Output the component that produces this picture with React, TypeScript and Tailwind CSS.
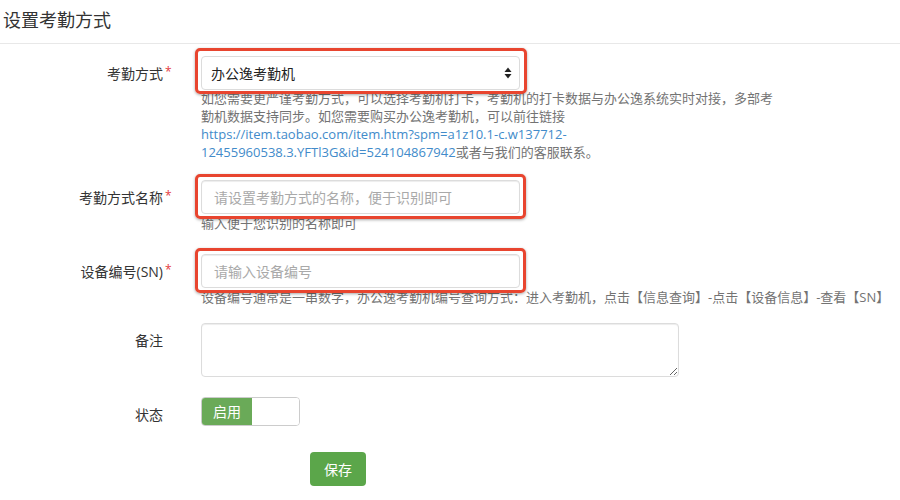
import React from "react";

const font = "font-['Open_Sans','Noto_Sans_CJK_SC',sans-serif]";

function Label({ text, required }: { text: string; required?: boolean }) {
  return (
    <div className="w-[163px] shrink-0 h-[34px] flex items-center justify-end">
      <span className="relative text-[14px] text-[#333]">
        {text}
        {required && (
          <span className="absolute left-full top-[0px] ml-[2px] text-[#e4393c] text-[12px]">*</span>
        )}
      </span>
    </div>
  );
}

function RedBox({ cls }: { cls: string }) {
  return (
    <div
      className={`pointer-events-none absolute border-[3px] border-[#e8452f] rounded-[5px] shadow-[0_1px_3px_rgba(0,0,0,0.35)] ${cls}`}
    />
  );
}

export default function App() {
  return (
    <div className={`w-[900px] h-[500px] bg-white overflow-hidden ${font}`}>
      <div className="h-[44px] border-b border-[#e8e8e8] flex items-center pl-[3px] pb-[2px]">
        <h1 className="text-[18px] text-[#333]">设置考勤方式</h1>
      </div>

      {/* Row 1 */}
      <div className="flex gap-[38px] mt-[12px]">
        <Label text="考勤方式" required />
        <div className="w-[319px] shrink-0">
          <div className="relative">
            <div className="h-[34px] border border-[#dcdcdc] rounded-[4px] bg-white flex items-center justify-between pl-[9px] pr-[7px]">
              <span className="text-[14px] text-[#222]">办公逸考勤机</span>
              <svg width="8" height="12" viewBox="0 0 8 12">
                <path d="M4 0.5 L7.5 5 L0.5 5 Z" fill="#222" />
                <path d="M4 11.5 L7.5 7 L0.5 7 Z" fill="#222" />
              </svg>
            </div>
            <RedBox cls="left-[-6px] right-[-7px] top-[-8px] bottom-[-4px]" />
          </div>
          <p className="w-[620px] text-[13px] leading-[18px] text-[#737373] whitespace-nowrap -mt-[1px]">
            如您需要更严谨考勤方式，可以选择考勤机打卡，考勤机的打卡数据与办公逸系统实时对接，多部考
            <br />
            勤机数据支持同步。如您需要购买办公逸考勤机，可以前往链接
            <br />
            <a className="text-[#428bca]">
              https://item.taobao.com/item.htm?spm=a1z10.1-c.w137712-
              <br />
              12455960538.3.YFTl3G&amp;id=524104867942
            </a>
            或者与我们的客服联系。
          </p>
        </div>
      </div>

      {/* Row 2 */}
      <div className="flex gap-[38px] mt-[19px]">
        <Label text="考勤方式名称" required />
        <div className="w-[319px] shrink-0">
          <div className="relative">
            <input
              className="w-full h-[34px] border border-[#dcdcdc] rounded-[4px] px-[12px] text-[14px] text-[#333] placeholder:text-[#a9a9a9] shadow-[inset_0_1px_1px_rgba(0,0,0,0.075)] outline-none"
              placeholder="请设置考勤方式的名称，便于识别即可"
            />
            <RedBox cls="left-[-6px] right-[-6px] top-[-6px] bottom-[-5px]" />
          </div>
          <p className="text-[13px] leading-[18px] text-[#737373] whitespace-nowrap">输入便于您识别的名称即可</p>
        </div>
      </div>

      {/* Row 3 */}
      <div className="flex gap-[38px] mt-[22px]">
        <Label text="设备编号(SN)" required />
        <div className="w-[319px] shrink-0">
          <div className="relative">
            <input
              className="w-full h-[34px] border border-[#dcdcdc] rounded-[4px] px-[12px] text-[14px] text-[#333] placeholder:text-[#a9a9a9] shadow-[inset_0_1px_1px_rgba(0,0,0,0.075)] outline-none"
              placeholder="请输入设备编号"
            />
            <RedBox cls="left-[-6px] right-[-6px] top-[-6px] bottom-[-5px]" />
          </div>
          <p className="text-[13px] leading-[18px] text-[#737373] whitespace-nowrap">
            设备编号通常是一串数字，办公逸考勤机编号查询方式：进入考勤机，点击【信息查询】-点击【设备信息】-查看【SN】
          </p>
        </div>
      </div>

      {/* Row 4 */}
      <div className="flex gap-[38px] mt-[17px]">
        <Label text="备注" />
        <textarea className="w-[478px] h-[54px] border border-[#dcdcdc] rounded-[4px] shadow-[inset_0_1px_1px_rgba(0,0,0,0.075)] outline-none" />
      </div>

      {/* Row 5 */}
      <div className="flex gap-[38px] mt-[20px]">
        <Label text="状态" />
        <div className="w-[99px] h-[29px] border border-[#cccccc] rounded-[4px] overflow-hidden flex">
          <div className="w-[50px] bg-[#6aaa58] text-white text-[14px] flex items-center justify-center">启用</div>
          <div className="flex-1 bg-white" />
        </div>
      </div>

      {/* Row 6 */}
      <div className="flex mt-[21px] pl-[310px]">
        <button className="w-[56px] h-[34px] bg-[#5ba64a] rounded-[4px] text-white text-[14px]">保存</button>
      </div>
    </div>
  );
}
